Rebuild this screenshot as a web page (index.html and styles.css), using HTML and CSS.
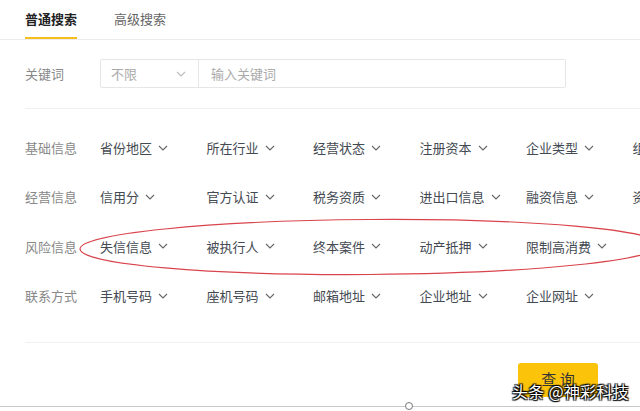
FILE: index.html
```html
<!DOCTYPE html>
<html lang="zh">
<head>
    <meta charset="UTF-8">
    <meta name="viewport" content="width=device-width, initial-scale=1.0">
    <title>企业搜索</title>
    <link rel="stylesheet" href="styles.css">
</head>
<body>

    <!-- 标签页 -->
    <div class="tabs">
        <span class="tab active">普通搜索</span>
        <span class="tab">高级搜索</span>
    </div>

    <!-- 关键词 -->
    <div class="keyword-row">
        <span class="label">关键词</span>
        <div class="search-box">
            <div class="scope">
                <span>不限</span>
                <svg class="chev light" viewBox="0 0 10 6"><path d="M1 1 L5 5 L9 1"/></svg>
            </div>
            <input type="text" class="keyword" placeholder="输入关键词">
        </div>
    </div>

    <div class="divider"></div>

    <!-- 筛选条件 -->
    <div class="filters">
        <div class="filter-row">
            <span class="label">基础信息</span>
            <span class="item">省份地区<svg class="chev" viewBox="0 0 10 6"><path d="M1 1 L5 5 L9 1"/></svg></span>
            <span class="item">所在行业<svg class="chev" viewBox="0 0 10 6"><path d="M1 1 L5 5 L9 1"/></svg></span>
            <span class="item">经营状态<svg class="chev" viewBox="0 0 10 6"><path d="M1 1 L5 5 L9 1"/></svg></span>
            <span class="item">注册资本<svg class="chev" viewBox="0 0 10 6"><path d="M1 1 L5 5 L9 1"/></svg></span>
            <span class="item">企业类型<svg class="chev" viewBox="0 0 10 6"><path d="M1 1 L5 5 L9 1"/></svg></span>
            <span class="item">组织机构<svg class="chev" viewBox="0 0 10 6"><path d="M1 1 L5 5 L9 1"/></svg></span>
        </div>
        <div class="filter-row">
            <span class="label">经营信息</span>
            <span class="item">信用分<svg class="chev" viewBox="0 0 10 6"><path d="M1 1 L5 5 L9 1"/></svg></span>
            <span class="item">官方认证<svg class="chev" viewBox="0 0 10 6"><path d="M1 1 L5 5 L9 1"/></svg></span>
            <span class="item">税务资质<svg class="chev" viewBox="0 0 10 6"><path d="M1 1 L5 5 L9 1"/></svg></span>
            <span class="item">进出口信息<svg class="chev" viewBox="0 0 10 6"><path d="M1 1 L5 5 L9 1"/></svg></span>
            <span class="item">融资信息<svg class="chev" viewBox="0 0 10 6"><path d="M1 1 L5 5 L9 1"/></svg></span>
            <span class="item">资质证书<svg class="chev" viewBox="0 0 10 6"><path d="M1 1 L5 5 L9 1"/></svg></span>
        </div>
        <div class="filter-row">
            <span class="label">风险信息</span>
            <span class="item">失信信息<svg class="chev" viewBox="0 0 10 6"><path d="M1 1 L5 5 L9 1"/></svg></span>
            <span class="item">被执行人<svg class="chev" viewBox="0 0 10 6"><path d="M1 1 L5 5 L9 1"/></svg></span>
            <span class="item">终本案件<svg class="chev" viewBox="0 0 10 6"><path d="M1 1 L5 5 L9 1"/></svg></span>
            <span class="item">动产抵押<svg class="chev" viewBox="0 0 10 6"><path d="M1 1 L5 5 L9 1"/></svg></span>
            <span class="item">限制高消费<svg class="chev" viewBox="0 0 10 6"><path d="M1 1 L5 5 L9 1"/></svg></span>
        </div>
        <div class="filter-row">
            <span class="label">联系方式</span>
            <span class="item">手机号码<svg class="chev" viewBox="0 0 10 6"><path d="M1 1 L5 5 L9 1"/></svg></span>
            <span class="item">座机号码<svg class="chev" viewBox="0 0 10 6"><path d="M1 1 L5 5 L9 1"/></svg></span>
            <span class="item">邮箱地址<svg class="chev" viewBox="0 0 10 6"><path d="M1 1 L5 5 L9 1"/></svg></span>
            <span class="item">企业地址<svg class="chev" viewBox="0 0 10 6"><path d="M1 1 L5 5 L9 1"/></svg></span>
            <span class="item">企业网址<svg class="chev" viewBox="0 0 10 6"><path d="M1 1 L5 5 L9 1"/></svg></span>
        </div>

        <!-- 红色圈注 -->
        <svg class="mark" viewBox="0 0 600 70">
            <ellipse cx="300" cy="35" rx="290" ry="27.5" transform="rotate(-0.4 300 35)"/>
        </svg>
    </div>

    <div class="divider"></div>

    <div class="actions">
        <button class="query">查 询</button>
    </div>

    <div class="bottom-line"><span class="handle"></span></div>

    <div class="watermark">头条 @神彩科技</div>

</body>
</html>
```

FILE: styles.css
```css
body {
    margin: 0;
    font-family: "Noto Sans CJK SC", "Liberation Sans", sans-serif;
    font-size: 13px;
    color: #333;
    background-color: #fff;
    position: relative;
    height: 411px;
    overflow: hidden;
}
.tabs {
    display: flex;
    gap: 37px;
    padding-left: 25px;
    height: 39px;
    border-bottom: 1px solid #ececec;
}
.tab {
    display: flex;
    align-items: center;
    color: #666;
    height: 37px;
    border-bottom: 2px solid transparent;
}
.tab.active {
    color: #222;
    font-weight: bold;
    border-bottom-color: #f7bd1a;
}
.label {
    width: 75px;
    flex-shrink: 0;
    color: #888;
}
.keyword-row {
    display: flex;
    align-items: center;
    padding: 19px 25px 20px;
}
.search-box {
    display: flex;
    height: 29px;
    width: 466px;
    border: 1px solid #e6e6e6;
    border-radius: 2px;
    box-sizing: border-box;
}
.scope {
    display: flex;
    align-items: center;
    justify-content: space-between;
    width: 98px;
    padding: 0 12px 0 10px;
    box-sizing: border-box;
    border-right: 1px solid #e6e6e6;
    color: #aaa;
}
.keyword {
    flex: 1;
    border: none;
    outline: none;
    padding: 0 12px;
    font-family: inherit;
    font-size: 13px;
    color: #333;
}
.keyword::placeholder {
    color: #aaa;
}
.divider {
    height: 1px;
    margin-left: 25px;
    background-color: #f0f0f0;
}
.filters {
    position: relative;
    padding: 14px 0 22px 25px;
}
.filter-row {
    display: flex;
    align-items: center;
    height: 49.3px;
    white-space: nowrap;
}
.item {
    display: flex;
    align-items: center;
    gap: 6px;
    width: 106.5px;
    flex-shrink: 0;
    color: #444a52;
}
.chev {
    width: 10px;
    height: 6px;
    fill: none;
    stroke: #666;
    stroke-width: 1.1;
}
.chev.light {
    stroke: #bbb;
}
.mark {
    position: absolute;
    left: 70px;
    top: 103px;
    width: 600px;
    height: 70px;
    pointer-events: none;
}
.mark ellipse {
    fill: none;
    stroke: #d9444c;
    stroke-width: 1.2;
}
.actions {
    display: flex;
    justify-content: flex-end;
    padding: 20px 42px 0 0;
}
.query {
    width: 80px;
    height: 34px;
    padding-bottom: 4px;
    background-color: #fcc30b;
    border: none;
    border-radius: 3px;
    font-family: inherit;
    font-size: 15px;
    color: #333;
    cursor: pointer;
}
.bottom-line {
    position: absolute;
    left: 0;
    right: 0;
    top: 406px;
    height: 1px;
    background-color: #c8c8c8;
}
.handle {
    position: absolute;
    left: 405px;
    top: -4px;
    width: 6px;
    height: 6px;
    border: 1.5px solid #777;
    border-radius: 50%;
    background-color: #fff;
}
.watermark {
    position: absolute;
    left: 512px;
    top: 379px;
    font-size: 16px;
    letter-spacing: 0.3px;
    color: #fff;
    text-shadow: 0 0 1px #000, 1px 1px 1px #000, -1px -1px 1px #000, 1px -1px 1px #000, -1px 1px 1px #000;
}
```
